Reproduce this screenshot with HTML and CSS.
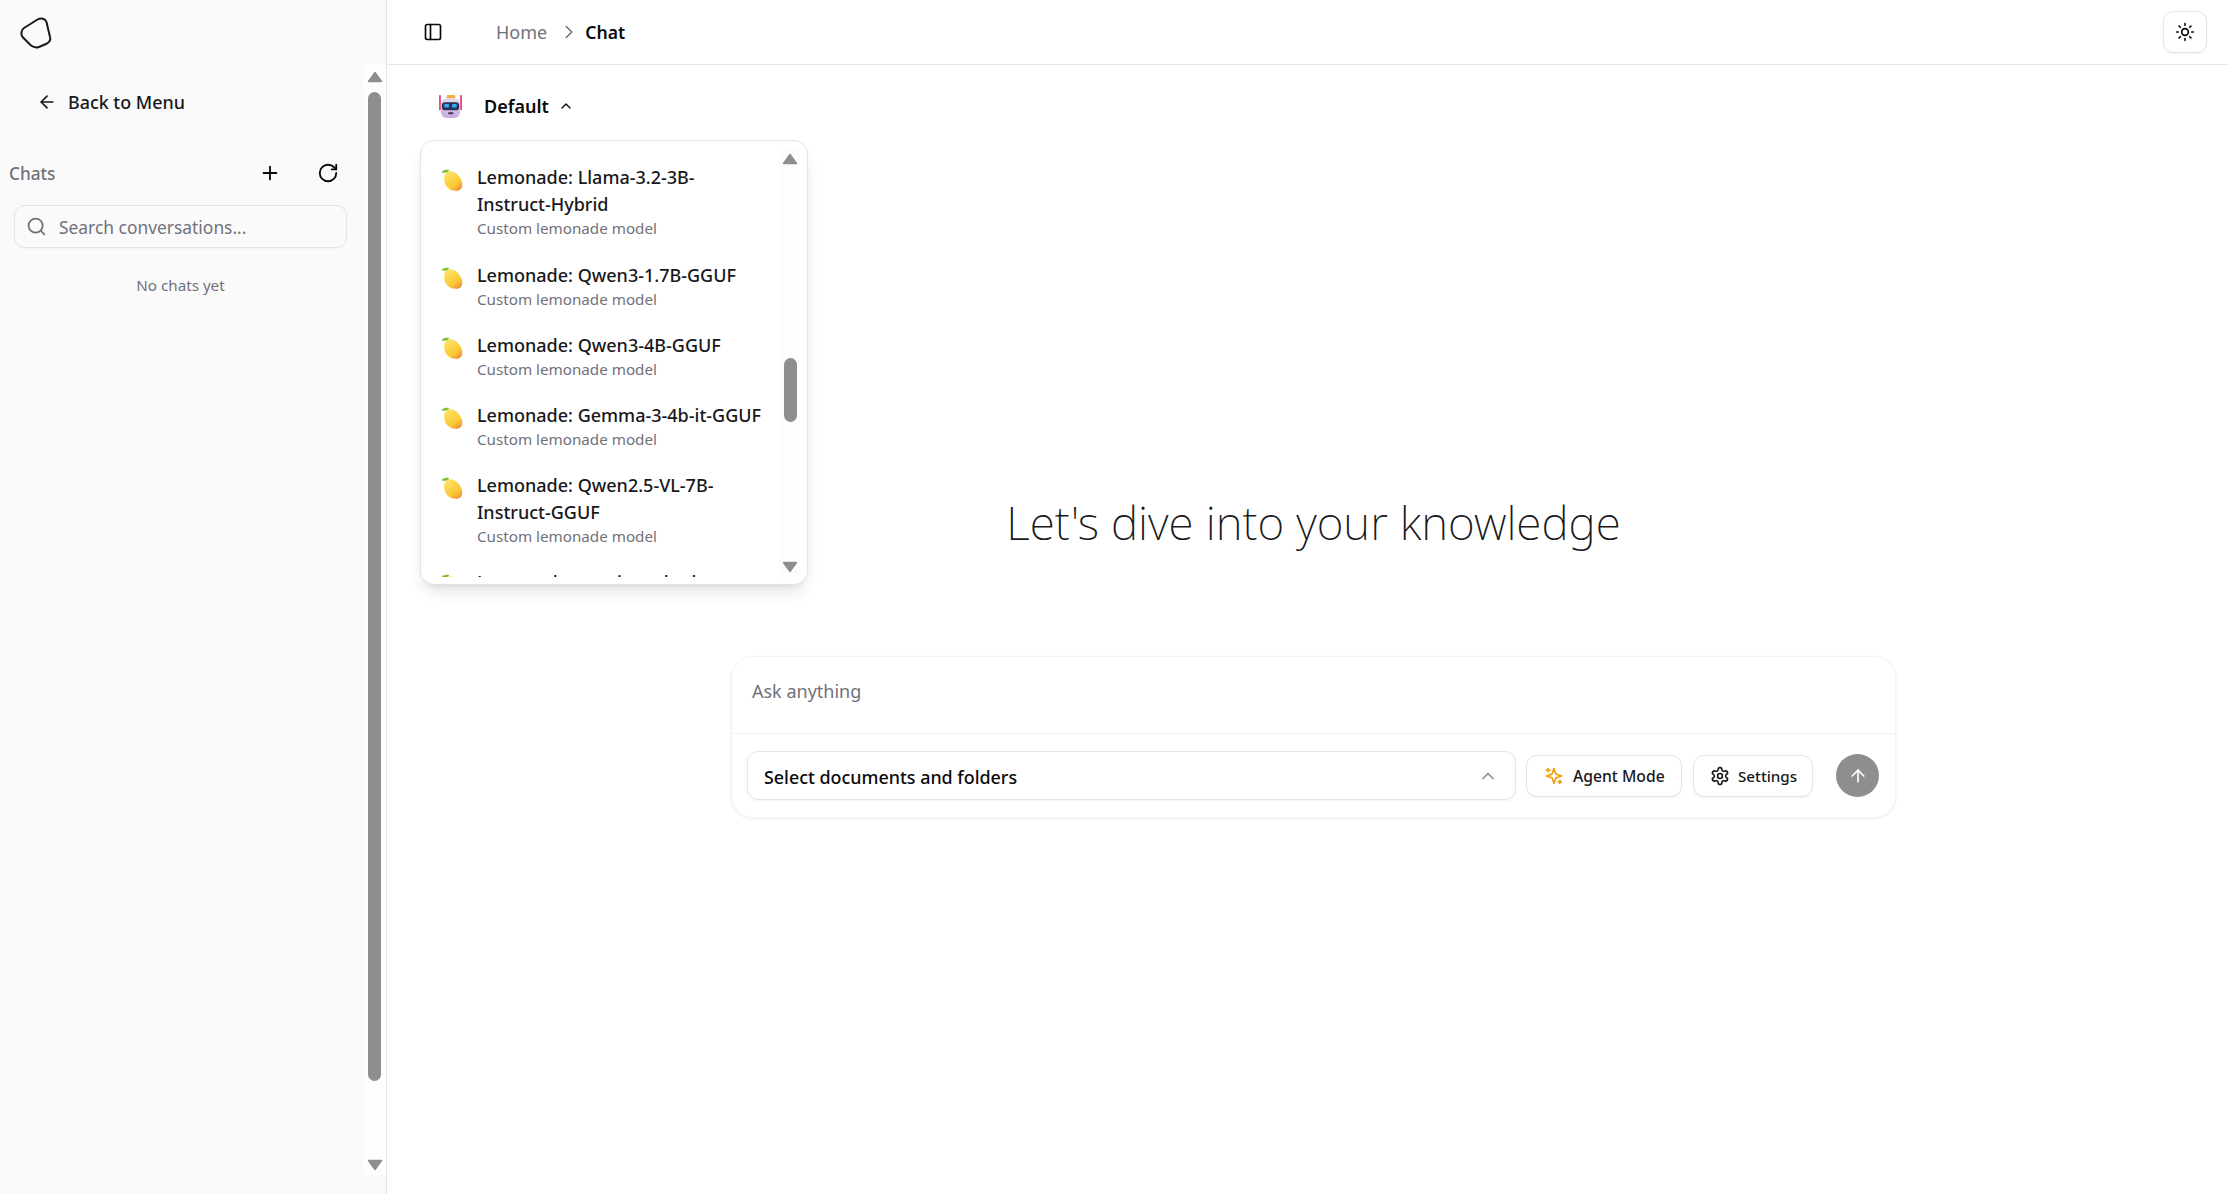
FILE: index.html
```html
<!DOCTYPE html>
<html lang="en">
<head>
<meta charset="utf-8">
<title>Chat</title>
<link rel="stylesheet" href="styles.css">
</head>
<body>
<svg class="defs" width="0" height="0" aria-hidden="true">
  <defs>
    <linearGradient id="lem" x1="0.2" y1="0" x2="0.8" y2="1">
      <stop offset="0" stop-color="#fde468"/><stop offset="0.68" stop-color="#fbc833"/><stop offset="1" stop-color="#ee8f3c"/>
    </linearGradient>
    <linearGradient id="head" x1="0" y1="0" x2="0" y2="1">
      <stop offset="0" stop-color="#e4dcee"/><stop offset="1" stop-color="#c8a9e2"/>
    </linearGradient>
    <symbol id="lemon" viewBox="0 0 24 24">
      <path d="M6 3.500C9 1.500 14 2 18 6 22 10 24 15 23 19 22.500 21.500 21 23 19 23.300 17.800 24.200 16 24 15 23.500 10 23.500 5.500 20 4 15 2.800 10.500 3.500 5.500 6 3.500Z" fill="url(#lem)"/>
      <path d="M.5 3.500C2 1 5.500 .2 9 1.200 8 3.500 4.500 5 .5 3.500Z" fill="#7fbf2e"/>
    </symbol>
    <symbol id="tri-up" viewBox="0 0 16 12"><path d="M8 1.500 14.500 10.500H1.500Z" fill="#8e8e8e" stroke="#8e8e8e" stroke-width="1.500" stroke-linejoin="round"/></symbol>
    <symbol id="tri-down" viewBox="0 0 16 12"><path d="M8 10.500 14.500 1.500H1.500Z" fill="#8e8e8e" stroke="#8e8e8e" stroke-width="1.500" stroke-linejoin="round"/></symbol>
  </defs>
</svg>
<div class="app">
  <aside class="sidebar">
    <div class="side-top">
      <svg class="logo" viewBox="0 0 32 32" fill="none" stroke="#18181b" stroke-width="2"><path d="M4 12 17.500 3.500C21 1.500 25.500 2.500 26.500 6L30 21C31 24 29.500 26 27 27.500L19 31C16 32 13 31 11 29.500L3 21.500C.5 18.500 1 14 4 12Z" transform="translate(0 -1)"/></svg>
    </div>
    <div class="side-body">
      <div class="side-content">
        <a class="back"><svg class="i18" viewBox="0 0 24 24"><path d="m12 19-7-7 7-7"/><path d="M19 12H5"/></svg><span>Back to Menu</span></a>
        <div class="chats-head">
          <span class="chats-label">Chats</span>
          <div class="chats-actions">
            <svg class="i20" viewBox="0 0 24 24"><path d="M5 12h14"/><path d="M12 5v14"/></svg>
            <svg class="i20" viewBox="0 0 24 24"><path d="M21 12a9 9 0 1 1-9-9c2.520 0 4.930 1 6.740 2.740L21 8"/><path d="M21 3v5h-5"/></svg>
          </div>
        </div>
        <div class="search">
          <svg class="i20 muted" viewBox="0 0 24 24"><circle cx="11" cy="11" r="8"/><path d="m21 21-4.300-4.300"/></svg>
          <span>Search conversations...</span>
        </div>
        <p class="empty">No chats yet</p>
      </div>
      <div class="scrollbar side-scroll">
        <svg class="arrow" viewBox="0 0 16 12"><use href="#tri-up"/></svg>
        <div class="track"><div class="thumb side-thumb"></div></div>
        <svg class="arrow" viewBox="0 0 16 12"><use href="#tri-down"/></svg>
      </div>
    </div>
  </aside>
  <main class="main">
    <header class="topbar">
      <svg class="i20 panel" viewBox="0 0 24 24"><rect x="3" y="3" width="18" height="18" rx="2"/><path d="M9 3v18"/></svg>
      <nav class="crumbs">
        <span class="crumb-home">Home</span>
        <svg class="i18 crumb-sep" viewBox="0 0 24 24"><path d="m9 18 6-6-6-6"/></svg>
        <span class="crumb-cur">Chat</span>
      </nav>
      <button class="theme"><svg class="i20" viewBox="0 0 24 24"><circle cx="12" cy="12" r="4"/><path d="M12 2v2"/><path d="M12 20v2"/><path d="m4.930 4.930 1.410 1.410"/><path d="m17.660 17.660 1.410 1.410"/><path d="M2 12h2"/><path d="M20 12h2"/><path d="m6.340 17.660-1.410 1.410"/><path d="m19.070 4.930-1.410 1.410"/></svg></button>
    </header>
    <section class="page">
      <div class="model-row">
        <svg class="robot" viewBox="0 0 24 24">
          <rect x="0" y="0" width="2" height="16" rx=".8" fill="#f0457f"/>
          <rect x="22" y="0" width="2" height="16" rx=".8" fill="#f0457f"/>
          <rect x="8" y="0" width="9" height="4" rx="1.500" fill="#f3b23e"/>
          <rect x="2" y="3.500" width="20" height="20.500" rx="6" fill="url(#head)"/>
          <rect x="3" y="7.500" width="18" height="8.500" rx="3.500" fill="#2b3355"/>
          <rect x="5.500" y="9.500" width="5" height="3.500" rx="1" fill="#39a7f0"/>
          <rect x="13.500" y="9.500" width="5" height="3.500" rx="1" fill="#39a7f0"/>
          <rect x="9.500" y="18" width="5.500" height="2" rx=".8" fill="#3c3a52"/>
        </svg>
        <span class="model-name">Default</span>
        <svg class="i16" viewBox="0 0 24 24"><path d="m18 15-6-6-6 6"/></svg>
      </div>
      <div class="dropdown">
        <ul class="model-list">
          <li class="model model-first"><svg class="lemon" viewBox="0 0 24 24"><use href="#lemon"/></svg><div><div class="m-title">Lemonade: Llama-3.2-3B-<br>Instruct-Hybrid</div><div class="m-sub">Custom lemonade model</div></div></li>
          <li class="model"><svg class="lemon" viewBox="0 0 24 24"><use href="#lemon"/></svg><div><div class="m-title">Lemonade: Qwen3-1.7B-GGUF</div><div class="m-sub">Custom lemonade model</div></div></li>
          <li class="model"><svg class="lemon" viewBox="0 0 24 24"><use href="#lemon"/></svg><div><div class="m-title">Lemonade: Qwen3-4B-GGUF</div><div class="m-sub">Custom lemonade model</div></div></li>
          <li class="model"><svg class="lemon" viewBox="0 0 24 24"><use href="#lemon"/></svg><div><div class="m-title">Lemonade: Gemma-3-4b-it-GGUF</div><div class="m-sub">Custom lemonade model</div></div></li>
          <li class="model"><svg class="lemon" viewBox="0 0 24 24"><use href="#lemon"/></svg><div><div class="m-title">Lemonade: Qwen2.5-VL-7B-<br>Instruct-GGUF</div><div class="m-sub">Custom lemonade model</div></div></li>
          <li class="model"><svg class="lemon" viewBox="0 0 24 24"><use href="#lemon"/></svg><div><div class="m-title">Lemonade: nomic-embed-text</div></div></li>
        </ul>
        <div class="scrollbar drop-scroll">
          <svg class="arrow" viewBox="0 0 16 12"><use href="#tri-up"/></svg>
          <div class="track"><div class="thumb drop-thumb"></div></div>
          <svg class="arrow" viewBox="0 0 16 12"><use href="#tri-down"/></svg>
        </div>
      </div>
      <h1 class="hero">Let's dive into your knowledge</h1>
      <div class="composer">
        <div class="ask">Ask anything</div>
        <div class="tools">
          <div class="select"><span>Select documents and folders</span><svg class="i20 gray" viewBox="0 0 24 24"><path d="m18 15-6-6-6 6"/></svg></div>
          <button class="tool tool-agent"><svg class="i20 amber" viewBox="0 0 24 24"><path d="m12 3-1.912 5.813a2 2 0 0 1-1.275 1.275L3 12l5.813 1.912a2 2 0 0 1 1.275 1.275L12 21l1.912-5.813a2 2 0 0 1 1.275-1.275L21 12l-5.813-1.912a2 2 0 0 1-1.275-1.275L12 3Z"/><path d="M5 3v4"/><path d="M19 17v4"/><path d="M3 5h4"/><path d="M17 19h4"/></svg><span>Agent Mode</span></button>
          <button class="tool tool-settings"><svg class="i20" viewBox="0 0 24 24"><path d="M12.220 2h-.44a2 2 0 0 0-2 2v.18a2 2 0 0 1-1 1.730l-.43.25a2 2 0 0 1-2 0l-.15-.08a2 2 0 0 0-2.730.73l-.22.38a2 2 0 0 0 .73 2.730l.15.1a2 2 0 0 1 1 1.720v.51a2 2 0 0 1-1 1.740l-.15.09a2 2 0 0 0-.73 2.730l.22.38a2 2 0 0 0 2.730.73l.15-.08a2 2 0 0 1 2 0l.43.25a2 2 0 0 1 1 1.730V20a2 2 0 0 0 2 2h.44a2 2 0 0 0 2-2v-.18a2 2 0 0 1 1-1.730l.43-.25a2 2 0 0 1 2 0l.15.08a2 2 0 0 0 2.730-.73l.22-.39a2 2 0 0 0-.73-2.730l-.15-.08a2 2 0 0 1-1-1.740v-.5a2 2 0 0 1 1-1.740l.15-.09a2 2 0 0 0 .73-2.730l-.22-.38a2 2 0 0 0-2.730-.73l-.15.08a2 2 0 0 1-2 0l-.43-.25a2 2 0 0 1-1-1.730V4a2 2 0 0 0-2-2z"/><circle cx="12" cy="12" r="3"/></svg><span>Settings</span></button>
          <button class="send"><svg class="i20 white" viewBox="0 0 24 24"><path d="m5 12 7-7 7 7"/><path d="M12 19V5"/></svg></button>
        </div>
      </div>
    </section>
  </main>
</div>
</body>
</html>
```
FILE: styles.css
```css
* { box-sizing: border-box; }
html, body { margin: 0; height: 100%; }
body {
  font-family: "Noto Sans", "Open Sans", sans-serif;
  color: #09090b;
  background: #fff;
  overflow: hidden;
}
button { font: inherit; color: inherit; background: #fff; padding: 0; cursor: pointer; }
.defs { position: absolute; }
svg { flex: none; display: block; }
.i16, .i18, .i20 { fill: none; stroke: currentColor; stroke-width: 2; stroke-linecap: round; stroke-linejoin: round; }
.i16 { width: 16px; height: 16px; }
.i18 { width: 18px; height: 18px; }
.i20 { width: 20px; height: 20px; }
.muted { color: #71717a; }
.gray { color: #8e8e8e; }
.amber { color: #f59e0b; }
.white { color: #fff; }

.app { display: flex; height: 1194px; }

.sidebar {
  width: 387px;
  flex: none;
  background: #fafafa;
  border-right: 1px solid #e4e4e7;
  display: flex;
  flex-direction: column;
}
.side-top { height: 64px; flex: none; padding: 17px 0 0 20px; }
.logo { width: 32px; height: 32px; }
.side-body { flex: 1; display: flex; min-height: 0; }
.side-content { flex: 1; min-width: 0; padding: 0 16px 0 0; }
.back {
  display: flex; align-items: center; gap: 13px;
  height: 76px; padding-left: 37px;
  font-size: 17.900px; font-weight: 500; color: #18181b;
}
.back .i18 { width: 20px; height: 20px; margin-right: -2px; }
.chats-head { display: flex; align-items: center; justify-content: space-between; height: 30px; padding-left: 9px; margin-top: 18px; }
.chats-label { font-size: 17.200px; font-weight: 500; color: #71717a; }
.chats-actions { display: flex; gap: 36px; margin-right: 8px; }
.chats-actions .i20 { width: 22px; height: 22px; }
.search {
  margin: 17px 0 0 14px; width: 333px; height: 43px;
  display: flex; align-items: center; gap: 12px; padding-left: 11px;
  border: 1px solid #e4e4e7; border-radius: 11px;
  font-size: 17.400px; color: #71717a;
  box-shadow: 0 1px 2px rgba(0,0,0,.04);
}
.search .i20 { width: 21px; height: 21px; }
.empty { margin: 27px 0 0; padding-left: 14px; width: 347px; text-align: center; font-size: 15.200px; color: #71717a; }

.scrollbar { flex: none; display: flex; flex-direction: column; align-items: center; background: #fdfdfd; }
.scrollbar .arrow { flex: none; width: 16px; height: 12px; }
.track { flex: 1; width: 13px; min-height: 0; }
.thumb { width: 13px; background: #8e8e8e; border-radius: 7px; }
.side-scroll { width: 23px; height: 1111px; padding-top: 7px; padding-bottom: 4px; }
.side-scroll .track { padding-top: 9px; }
.side-thumb { height: 989px; }

.main { flex: 1; min-width: 0; display: flex; flex-direction: column; }
.topbar {
  height: 65px; flex: none;
  display: flex; align-items: center;
  border-bottom: 1px solid #e4e4e7;
  padding: 0 20px 1px 36px;
}
.panel { margin-right: 53px; }
.crumbs { display: flex; align-items: center; gap: 5px; font-size: 18px; flex: 1; }
.crumb-home { color: #71717a; }
.crumb-sep { width: 22px; height: 22px; color: #71717a; stroke-width: 1.700; margin-left: 6px; }
.crumb-cur { font-weight: 600; font-size: 17.600px; }
.theme {
  width: 44px; height: 42px;
  display: flex; align-items: center; justify-content: center;
  border: 1px solid #e4e4e7; border-radius: 10px;
  box-shadow: 0 1px 2px rgba(0,0,0,.05);
}

.page { position: relative; flex: 1; padding: 0 20px 0 33px; }
.model-row { display: flex; align-items: center; height: 82px; padding: 0 0 0 19px; }
.robot { width: 23px; height: 23px; margin-right: 22px; }
.model-name { font-size: 18px; font-weight: 600; margin-right: 9px; }

.dropdown {
  position: absolute; left: 33px; top: 75px;
  width: 388px; height: 445px;
  display: flex; padding: 7px 6px 7px 0;
  background: #fff;
  border: 1px solid #e4e4e7; border-radius: 14px;
  box-shadow: 0 10px 15px -3px rgba(0,0,0,.1), 0 4px 6px -4px rgba(0,0,0,.1);
  overflow: hidden;
}
.model-list { flex: 1; list-style: none; margin: 0; padding: 16px 0 0 20px; overflow: hidden; min-width: 0; }
.model { display: flex; gap: 14px; padding-bottom: 22px; }
.model-first { padding-bottom: 23px; }
.lemon { width: 22px; height: 22px; margin-top: 5px; }
.m-title { font-size: 18px; font-weight: 500; line-height: 27px; white-space: nowrap; color: #18181b; }
.m-sub { font-size: 15.200px; line-height: 21px; color: #71717a; white-space: nowrap; }
.drop-scroll { width: 22px; padding-bottom: 3px; }
.drop-scroll .arrow { margin-top: 5px; }
.drop-scroll .arrow + .track + .arrow { margin-top: 0; margin-bottom: 1px; }
.drop-scroll .track { padding-top: 193px; }
.drop-thumb { height: 64px; }

.hero {
  margin: 0;
  padding-top: 344px;
  text-align: center;
  font-size: 46px;
  line-height: 62px;
  font-weight: 200;
  color: #18181b;
}
.composer {
  margin: 103px 0 0 311px;
  width: 1165px; height: 162px;
  border: 1px solid #f4f4f5; border-radius: 22px;
  box-shadow: 0 1px 3px rgba(0,0,0,.07);
  background: #fff;
}
.ask {
  height: 77px; padding: 22px 0 0 20px;
  border-bottom: 1px solid #f0f0f1;
  font-size: 18px; color: #71717a;
}
.tools { display: flex; align-items: center; padding: 0 16px 0 15px; height: 83px; }
.select {
  width: 769px; height: 49px; flex: none;
  display: flex; align-items: center; justify-content: space-between;
  padding: 2px 17px 0 16px;
  border: 1px solid #e4e4e7; border-radius: 11px;
  font-size: 17.900px; font-weight: 500;
  box-shadow: 0 1px 2px rgba(0,0,0,.05);
}
.select .i20 { margin-top: -2px; }
.tool {
  height: 42px; flex: none;
  display: flex; align-items: center; gap: 8px;
  border: 1px solid #e4e4e7; border-radius: 11px;
  font-size: 15.700px; font-weight: 500; color: #18181b;
  box-shadow: 0 1px 2px rgba(0,0,0,.05);
}
.tool-agent { margin-left: 10px; width: 156px; padding-left: 17px; gap: 9px; }
.tool-settings { margin-left: 11px; width: 120px; padding-left: 16px; }
.tool-settings span { font-size: 15.200px; }
.send {
  margin-left: 23px; width: 43px; height: 43px; flex: none;
  display: flex; align-items: center; justify-content: center;
  border: 0; border-radius: 50%; background: #8e8e8e;
}
```
